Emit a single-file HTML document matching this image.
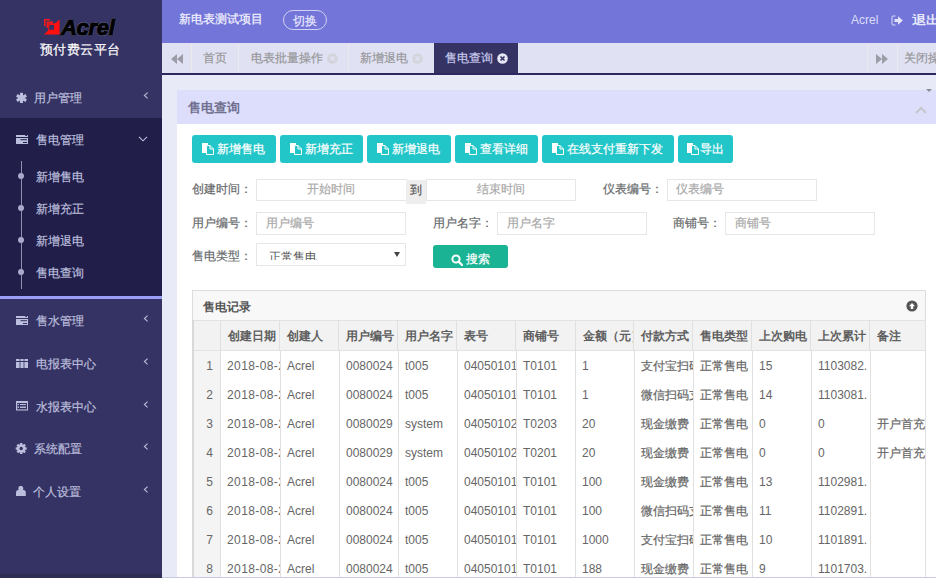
<!DOCTYPE html><html><head><meta charset="utf-8"><style>
*{box-sizing:border-box}
html,body{margin:0;padding:0}
body{width:936px;height:578px;overflow:hidden;position:relative;font-family:'Liberation Sans', sans-serif;background:#e9eaf8}
.t{position:absolute;line-height:20px;white-space:nowrap}
.abs{position:absolute}
.c{-webkit-text-stroke:0.2px currentColor}
</style></head><body>
<div class="abs" style="left:0;top:0;width:162px;height:578px;background:#353363"></div>
<div class="abs" style="left:0;top:118px;width:162px;height:178px;background:#211f4a"></div>
<div class="abs" style="left:0;top:296px;width:162px;height:3px;background:#9a9cf5"></div>
<div class="abs" style="left:0;top:574px;width:162px;height:4px;background:#2e2f52"></div>
<svg class="abs" style="left:40px;top:15px" width="24" height="24" viewBox="0 0 24 24">
<path d="M4 4 H10 V5.6 H5.6 V11 H4 Z" fill="#f01c1c"/>
<path d="M6.6 6.6 H13 V8.2 H8.2 V13 H6.6 Z" fill="#f01c1c"/>
<path d="M19.6 4.6 V19.6 H4 L8.5 15 H15 V8.5 Z" fill="#ff1010"/>
<path d="M8.2 8.2 H15 V15 H8.2 Z M9.3 10 V14.7 H14 V10 Z" fill="#ff1010" fill-rule="evenodd"/>
</svg>
<div class="t" style="left:61px;top:15.5px;font-size:22px;color:#000;font-weight:bold;font-style:italic;line-height:24px;letter-spacing:-0.3px;-webkit-text-stroke:1.1px #000;text-shadow:0.8px 0 0 rgba(150,150,190,.7),-0.8px 0 0 rgba(150,150,190,.7),0 0.8px 0 rgba(150,150,190,.7),0 -0.8px 0 rgba(150,150,190,.7)">Acrel</div>
<div class="t c" style="left:40px;top:40px;font-size:13px;color:#fff;letter-spacing:0.4px">预付费云平台</div>
<div class="t c" style="left:34px;top:88px;font-size:12px;color:#bcbedd;">用户管理</div>
<svg class="abs" style="left:16px;top:92px" width="11" height="12" viewBox="0 0 11 12"><g stroke="#bcbedd" stroke-width="3" stroke-linecap="butt"><line x1="5.5" y1="0.8" x2="5.5" y2="11"/><line x1="0.8" y1="3.4" x2="10.2" y2="8.6"/><line x1="0.8" y1="8.6" x2="10.2" y2="3.4"/></g><circle cx="5.5" cy="6" r="2.6" fill="#bcbedd"/></svg>
<svg class="abs" style="left:142.5px;top:92px" width="6" height="7" viewBox="0 0 6 7"><path d="M4.6 0.6 L1.4 3.5 L4.6 6.4" fill="none" stroke="#bcbedd" stroke-width="1.1"/></svg>
<div class="t c" style="left:36px;top:130px;font-size:12px;color:#bcbedd;">售电管理</div>
<svg class="abs" style="left:16px;top:135px" width="12" height="9" viewBox="0 0 12 9"><rect x="0" y="0" width="12" height="2" fill="#bcbedd"/><rect x="9.3" y="0" width="1.8" height="1" fill="#211f4a"/><rect x="0" y="3" width="12" height="6" fill="#bcbedd"/><rect x="4.5" y="4.2" width="6.5" height="1" fill="#211f4a"/><rect x="7" y="7" width="4" height="1" fill="#211f4a"/></svg>
<svg class="abs" style="left:138px;top:136px" width="10" height="6" viewBox="0 0 10 6"><path d="M1 0.8 L5 4.8 L9 0.8" fill="none" stroke="#bcbedd" stroke-width="1.1"/></svg>
<div class="t c" style="left:36px;top:311px;font-size:12px;color:#bcbedd;">售水管理</div>
<svg class="abs" style="left:16px;top:316px" width="12" height="9" viewBox="0 0 12 9"><rect x="0" y="0" width="12" height="2" fill="#bcbedd"/><rect x="9.3" y="0" width="1.8" height="1" fill="#353363"/><rect x="0" y="3" width="12" height="6" fill="#bcbedd"/><rect x="4.5" y="4.2" width="6.5" height="1" fill="#353363"/><rect x="7" y="7" width="4" height="1" fill="#353363"/></svg>
<svg class="abs" style="left:142.5px;top:315px" width="6" height="7" viewBox="0 0 6 7"><path d="M4.6 0.6 L1.4 3.5 L4.6 6.4" fill="none" stroke="#bcbedd" stroke-width="1.1"/></svg>
<div class="t c" style="left:36px;top:354px;font-size:12px;color:#bcbedd;">电报表中心</div>
<svg class="abs" style="left:16px;top:359px" width="12" height="9" viewBox="0 0 12 9"><rect x="0" y="0" width="12" height="2" fill="#bcbedd"/><rect x="0" y="3" width="12" height="6" fill="#bcbedd"/><rect x="3.6" y="0" width="0.8" height="9" fill="#353363"/><rect x="7.6" y="0" width="0.8" height="9" fill="#353363"/></svg>
<svg class="abs" style="left:142.5px;top:358px" width="6" height="7" viewBox="0 0 6 7"><path d="M4.6 0.6 L1.4 3.5 L4.6 6.4" fill="none" stroke="#bcbedd" stroke-width="1.1"/></svg>
<div class="t c" style="left:36px;top:397px;font-size:12px;color:#bcbedd;">水报表中心</div>
<svg class="abs" style="left:16px;top:401px" width="12" height="10" viewBox="0 0 12 10"><rect x="0" y="0" width="12" height="9.5" fill="#bcbedd"/><rect x="1.2" y="2" width="9.8" height="6.4" fill="#353363"/><rect x="4" y="3" width="6" height="1" fill="#bcbedd"/><rect x="4" y="5.5" width="6" height="1.4" fill="#bcbedd"/><rect x="1.5" y="3" width="1.5" height="1" fill="#bcbedd"/><rect x="1.5" y="5.5" width="1.5" height="1.4" fill="#bcbedd"/></svg>
<svg class="abs" style="left:142.5px;top:401px" width="6" height="7" viewBox="0 0 6 7"><path d="M4.6 0.6 L1.4 3.5 L4.6 6.4" fill="none" stroke="#bcbedd" stroke-width="1.1"/></svg>
<div class="t c" style="left:34px;top:439px;font-size:12px;color:#bcbedd;">系统配置</div>
<svg class="abs" style="left:15px;top:443px" width="12" height="11" viewBox="0 0 12 11"><g fill="#bcbedd"><circle cx="6.2" cy="5.5" r="4.2"/><g transform="translate(6.2 5.5)"><rect x="-1.2" y="-5.5" width="2.4" height="11"/><rect x="-1.2" y="-5.5" width="2.4" height="11" transform="rotate(45)"/><rect x="-1.2" y="-5.5" width="2.4" height="11" transform="rotate(90)"/><rect x="-1.2" y="-5.5" width="2.4" height="11" transform="rotate(135)"/></g></g><circle cx="6.2" cy="5.5" r="1.7" fill="#353363"/></svg>
<svg class="abs" style="left:142.5px;top:443px" width="6" height="7" viewBox="0 0 6 7"><path d="M4.6 0.6 L1.4 3.5 L4.6 6.4" fill="none" stroke="#bcbedd" stroke-width="1.1"/></svg>
<div class="t c" style="left:33px;top:482px;font-size:12px;color:#bcbedd;">个人设置</div>
<svg class="abs" style="left:16px;top:486px" width="10" height="10" viewBox="0 0 10 10"><circle cx="4.8" cy="2.4" r="2.5" fill="#bcbedd"/><path d="M0 10 V6.3 Q0 3.9 2.4 3.9 H7.4 Q9.8 3.9 9.8 6.3 V10 Z" fill="#bcbedd"/></svg>
<svg class="abs" style="left:142.5px;top:486px" width="6" height="7" viewBox="0 0 6 7"><path d="M4.6 0.6 L1.4 3.5 L4.6 6.4" fill="none" stroke="#bcbedd" stroke-width="1.1"/></svg>
<div class="abs" style="left:21px;top:161px;width:1px;height:128px;background:#8f90b0"></div>
<div class="t c" style="left:36px;top:167px;font-size:12px;color:#bcbedd;">新增售电</div>
<div class="abs" style="left:18px;top:173px;width:6px;height:6px;border-radius:50%;background:#a9aacb"></div>
<div class="t c" style="left:36px;top:199px;font-size:12px;color:#bcbedd;">新增充正</div>
<div class="abs" style="left:18px;top:205px;width:6px;height:6px;border-radius:50%;background:#a9aacb"></div>
<div class="t c" style="left:36px;top:231px;font-size:12px;color:#bcbedd;">新增退电</div>
<div class="abs" style="left:18px;top:237px;width:6px;height:6px;border-radius:50%;background:#a9aacb"></div>
<div class="t c" style="left:36px;top:263px;font-size:12px;color:#bcbedd;">售电查询</div>
<div class="abs" style="left:18px;top:269px;width:6px;height:6px;border-radius:50%;background:#a9aacb"></div>
<div class="abs" style="left:162px;top:0;width:774px;height:43px;background:#7375d9"></div>
<div class="t c" style="left:179px;top:9px;font-size:12px;color:#f4f4ff;">新电表测试项目</div>
<div class="abs" style="left:283px;top:10px;width:44px;height:20px;border:1px solid #cfd0f4;border-radius:10px"></div>
<div class="t c" style="left:293px;top:11px;font-size:12px;color:#e8e8ff;">切换</div>
<div class="t" style="left:851px;top:10px;font-size:12px;color:#dcdcf8;">Acrel</div>
<svg class="abs" style="left:891px;top:14.5px" width="13" height="11" viewBox="0 0 13 11"><path d="M4.5 1 H2 Q1 1 1 2 V9 Q1 10 2 10 H4.5" fill="none" stroke="#dcdcf8" stroke-width="1"/><path d="M3.5 4 H7 V1.2 L11.8 5.5 L7 9.8 V7 H3.5 Z" fill="#e4e4fb"/></svg>
<div class="t" style="left:912px;top:11px;font-size:14px;color:#e8e8fc;font-weight:bold;transform:scaleY(0.83);transform-origin:0 3px">退出</div>
<div class="abs" style="left:162px;top:43px;width:774px;height:30px;background:#e0e2f3"></div>
<div class="abs" style="left:162px;top:73px;width:774px;height:2px;background:#2b2960"></div>
<div class="abs" style="left:191px;top:43px;width:1px;height:30px;background:#ebe9ea"></div>
<div class="abs" style="left:238px;top:43px;width:1px;height:30px;background:#ebe9ea"></div>
<div class="abs" style="left:348px;top:43px;width:1px;height:30px;background:#ebe9ea"></div>
<div class="abs" style="left:867px;top:43px;width:1px;height:30px;background:#ebe9ea"></div>
<div class="abs" style="left:897px;top:43px;width:1px;height:30px;background:#ebe9ea"></div>
<svg class="abs" style="left:171px;top:54px" width="12" height="10" viewBox="0 0 12 10"><path d="M6 0 V10 L0 5 Z M12 0 V10 L6 5 Z" fill="#9c9ca6"/></svg>
<svg class="abs" style="left:876px;top:54px" width="12" height="10" viewBox="0 0 12 10"><path d="M0 0 V10 L6 5 Z M6 0 V10 L12 5 Z" fill="#9c9ca6"/></svg>
<div class="t c" style="left:203px;top:48px;font-size:12px;color:#979799;">首页</div>
<div class="t c" style="left:251px;top:48px;font-size:12px;color:#979799;">电表批量操作</div>
<div class="t c" style="left:360px;top:48px;font-size:12px;color:#979799;">新增退电</div>
<div class="t c" style="left:904px;top:48px;font-size:12px;color:#979799;">关闭操作</div>
<svg class="abs" style="left:327px;top:53px" width="11" height="11" viewBox="0 0 11 11"><circle cx="5.5" cy="5.5" r="5.3" fill="#d4d4dc"/><path d="M3.5 3.5 L7.5 7.5 M7.5 3.5 L3.5 7.5" stroke="#e0e2f3" stroke-width="1.6"/></svg>
<svg class="abs" style="left:412px;top:53px" width="11" height="11" viewBox="0 0 11 11"><circle cx="5.5" cy="5.5" r="5.3" fill="#d4d4dc"/><path d="M3.5 3.5 L7.5 7.5 M7.5 3.5 L3.5 7.5" stroke="#e0e2f3" stroke-width="1.6"/></svg>
<div class="abs" style="left:434px;top:43px;width:84px;height:30px;background:#353363"></div>
<div class="t c" style="left:445px;top:48px;font-size:12px;color:#c9caee;">售电查询</div>
<svg class="abs" style="left:497px;top:53px" width="11" height="11" viewBox="0 0 11 11"><circle cx="5.5" cy="5.5" r="5.3" fill="#e6e6f6"/><path d="M3.5 3.5 L7.5 7.5 M7.5 3.5 L3.5 7.5" stroke="#353363" stroke-width="1.6"/></svg>
<div class="abs" style="left:177px;top:90px;width:759px;height:488px;background:#fff"></div>
<div class="abs" style="left:177px;top:90px;width:759px;height:34px;background:#dcdefc"></div>
<div class="t" style="left:188px;top:98px;font-size:13px;color:#727090;font-weight:bold">售电查询</div>
<svg class="abs" style="left:926px;top:89px" width="7" height="3" viewBox="0 0 7 3"><path d="M0 0 H6 L3 3 Z" fill="#8d8d99"/></svg>
<svg class="abs" style="left:915px;top:106px" width="12" height="8" viewBox="0 0 12 8"><path d="M1 7 L6 2 L11 7" fill="none" stroke="#c6c5cc" stroke-width="2"/></svg>
<div class="abs" style="left:192px;top:135px;width:84px;height:28px;background:#23c6c8;border-radius:3px"></div>
<svg class="abs" style="left:202px;top:143px" width="12" height="12" viewBox="0 0 12 12"><path d="M0 0 H6 V2 H4 V10 H0 Z" fill="#fff"/><path d="M4.5 2.5 H8 L11.5 6 V11.5 H4.5 Z" fill="none" stroke="#fff" stroke-width="1"/><path d="M8 2.5 V6 H11.5" fill="none" stroke="#fff" stroke-width="1"/></svg>
<div class="t c" style="left:217px;top:139px;font-size:12px;color:#fff;">新增售电</div>
<div class="abs" style="left:280px;top:135px;width:83px;height:28px;background:#23c6c8;border-radius:3px"></div>
<svg class="abs" style="left:290px;top:143px" width="12" height="12" viewBox="0 0 12 12"><path d="M0 0 H6 V2 H4 V10 H0 Z" fill="#fff"/><path d="M4.5 2.5 H8 L11.5 6 V11.5 H4.5 Z" fill="none" stroke="#fff" stroke-width="1"/><path d="M8 2.5 V6 H11.5" fill="none" stroke="#fff" stroke-width="1"/></svg>
<div class="t c" style="left:305px;top:139px;font-size:12px;color:#fff;">新增充正</div>
<div class="abs" style="left:367px;top:135px;width:84px;height:28px;background:#23c6c8;border-radius:3px"></div>
<svg class="abs" style="left:377px;top:143px" width="12" height="12" viewBox="0 0 12 12"><path d="M0 0 H6 V2 H4 V10 H0 Z" fill="#fff"/><path d="M4.5 2.5 H8 L11.5 6 V11.5 H4.5 Z" fill="none" stroke="#fff" stroke-width="1"/><path d="M8 2.5 V6 H11.5" fill="none" stroke="#fff" stroke-width="1"/></svg>
<div class="t c" style="left:392px;top:139px;font-size:12px;color:#fff;">新增退电</div>
<div class="abs" style="left:455px;top:135px;width:83px;height:28px;background:#23c6c8;border-radius:3px"></div>
<svg class="abs" style="left:465px;top:143px" width="12" height="12" viewBox="0 0 12 12"><path d="M0 0 H6 V2 H4 V10 H0 Z" fill="#fff"/><path d="M4.5 2.5 H8 L11.5 6 V11.5 H4.5 Z" fill="none" stroke="#fff" stroke-width="1"/><path d="M8 2.5 V6 H11.5" fill="none" stroke="#fff" stroke-width="1"/></svg>
<div class="t c" style="left:480px;top:139px;font-size:12px;color:#fff;">查看详细</div>
<div class="abs" style="left:542px;top:135px;width:132px;height:28px;background:#23c6c8;border-radius:3px"></div>
<svg class="abs" style="left:552px;top:143px" width="12" height="12" viewBox="0 0 12 12"><path d="M0 0 H6 V2 H4 V10 H0 Z" fill="#fff"/><path d="M4.5 2.5 H8 L11.5 6 V11.5 H4.5 Z" fill="none" stroke="#fff" stroke-width="1"/><path d="M8 2.5 V6 H11.5" fill="none" stroke="#fff" stroke-width="1"/></svg>
<div class="t c" style="left:567px;top:139px;font-size:12px;color:#fff;">在线支付重新下发</div>
<div class="abs" style="left:678px;top:135px;width:55px;height:28px;background:#23c6c8;border-radius:3px"></div>
<svg class="abs" style="left:687px;top:143px" width="12" height="12" viewBox="0 0 12 12"><path d="M0 0 H6 V2 H4 V10 H0 Z" fill="#fff"/><path d="M4.5 2.5 H8 L11.5 6 V11.5 H4.5 Z" fill="none" stroke="#fff" stroke-width="1"/><path d="M8 2.5 V6 H11.5" fill="none" stroke="#fff" stroke-width="1"/></svg>
<div class="t c" style="left:700px;top:139px;font-size:12px;color:#fff;">导出</div>
<div class="t c" style="left:192px;top:179px;font-size:12px;color:#676a6c;">创建时间：</div>
<div class="abs" style="left:256px;top:179px;width:151px;height:22px;border:1px solid #e5e6e7;background:#fff"></div>
<div class="t c" style="left:307px;top:179px;font-size:12px;color:#a9a9a9;">开始时间</div>
<div class="abs" style="left:406px;top:180px;width:20px;height:24px;background:#eee"></div>
<div class="t c" style="left:410px;top:180px;font-size:12px;color:#555;">到</div>
<div class="abs" style="left:426px;top:179px;width:150px;height:22px;border:1px solid #e5e6e7;background:#fff"></div>
<div class="t c" style="left:477px;top:179px;font-size:12px;color:#a9a9a9;">结束时间</div>
<div class="t c" style="left:603px;top:179px;font-size:12px;color:#676a6c;">仪表编号：</div>
<div class="abs" style="left:667px;top:179px;width:150px;height:22px;border:1px solid #e5e6e7;background:#fff"></div>
<div class="t c" style="left:676px;top:179px;font-size:12px;color:#a9a9a9;">仪表编号</div>
<div class="t c" style="left:192px;top:213px;font-size:12px;color:#676a6c;">用户编号：</div>
<div class="abs" style="left:256px;top:212px;width:150px;height:23px;border:1px solid #e5e6e7;background:#fff"></div>
<div class="t c" style="left:266px;top:213px;font-size:12px;color:#a9a9a9;">用户编号</div>
<div class="t c" style="left:433px;top:213px;font-size:12px;color:#676a6c;">用户名字：</div>
<div class="abs" style="left:497px;top:212px;width:150px;height:23px;border:1px solid #e5e6e7;background:#fff"></div>
<div class="t c" style="left:507px;top:213px;font-size:12px;color:#a9a9a9;">用户名字</div>
<div class="t c" style="left:673px;top:213px;font-size:12px;color:#676a6c;">商铺号：</div>
<div class="abs" style="left:725px;top:212px;width:150px;height:23px;border:1px solid #e5e6e7;background:#fff"></div>
<div class="t c" style="left:735px;top:213px;font-size:12px;color:#a9a9a9;">商铺号</div>
<div class="t c" style="left:192px;top:246px;font-size:12px;color:#676a6c;">售电类型：</div>
<div class="abs" style="left:256px;top:243px;width:150px;height:23px;border:1px solid #e5e6e7;background:#fff"></div>
<div class="abs" style="left:269px;top:244px;width:120px;height:16px;overflow:hidden"><div class="t" style="left:0;top:2.5px;font-size:12px;color:#555">正常售电</div></div>
<svg class="abs" style="left:393.5px;top:251.5px" width="6" height="5" viewBox="0 0 6 5"><path d="M0 0 H6 L3 5 Z" fill="#444"/></svg>
<div class="abs" style="left:433px;top:245px;width:75px;height:23px;background:#1ab394;border-radius:3px"></div>
<svg class="abs" style="left:451px;top:253.5px" width="12" height="12" viewBox="0 0 12 12"><circle cx="5" cy="5" r="3.6" fill="none" stroke="#fff" stroke-width="2"/><path d="M7.5 7.5 L11 11" stroke="#fff" stroke-width="2.4" stroke-linecap="round"/></svg>
<div class="t c" style="left:466px;top:248.5px;font-size:12px;color:#fff;">搜索</div>
<div class="abs" style="left:192px;top:290px;width:734px;height:300px;border:1px solid #dddddd;background:#fff"></div>
<div class="abs" style="left:193px;top:291px;width:732px;height:30px;background:#f8f8f8;border-bottom:1px solid #e2e2e2"></div>
<div class="t" style="left:203px;top:297px;font-size:12px;color:#555;font-weight:bold">售电记录</div>
<svg class="abs" style="left:906px;top:300px" width="12" height="12" viewBox="0 0 12 12"><circle cx="6" cy="6" r="5.6" fill="#555"/><path d="M6 3 L9 6.2 H7.2 V9 H4.8 V6.2 H3 Z" fill="#fff"/></svg>
<div class="abs" style="left:194px;top:321px;width:731px;height:30px;background:#f2f2f2;border-bottom:1px solid #e3e3e3"></div>
<div class="abs" style="left:192px;top:320px;width:2px;height:258px;background:#d9d9d9"></div>
<div class="abs" style="left:194px;top:351px;width:26px;height:227px;background:#f4f4f4"></div>
<div class="abs" style="left:220px;top:321px;width:1px;height:30px;background:#e0e0e0"></div>
<div class="abs" style="left:279px;top:321px;width:1px;height:30px;background:#e0e0e0"></div>
<div class="abs" style="left:338px;top:321px;width:1px;height:30px;background:#e0e0e0"></div>
<div class="abs" style="left:397px;top:321px;width:1px;height:30px;background:#e0e0e0"></div>
<div class="abs" style="left:456px;top:321px;width:1px;height:30px;background:#e0e0e0"></div>
<div class="abs" style="left:515px;top:321px;width:1px;height:30px;background:#e0e0e0"></div>
<div class="abs" style="left:575px;top:321px;width:1px;height:30px;background:#e0e0e0"></div>
<div class="abs" style="left:633px;top:321px;width:1px;height:30px;background:#e0e0e0"></div>
<div class="abs" style="left:692px;top:321px;width:1px;height:30px;background:#e0e0e0"></div>
<div class="abs" style="left:751px;top:321px;width:1px;height:30px;background:#e0e0e0"></div>
<div class="abs" style="left:810px;top:321px;width:1px;height:30px;background:#e0e0e0"></div>
<div class="abs" style="left:869px;top:321px;width:1px;height:30px;background:#e0e0e0"></div>
<div class="abs" style="left:220px;top:351px;width:1px;height:227px;background:#e0e0e0"></div>
<div class="abs" style="left:280px;top:351px;width:1px;height:227px;background:#e0e0e0"></div>
<div class="abs" style="left:339px;top:351px;width:1px;height:227px;background:#e0e0e0"></div>
<div class="abs" style="left:398px;top:351px;width:1px;height:227px;background:#e0e0e0"></div>
<div class="abs" style="left:457px;top:351px;width:1px;height:227px;background:#e0e0e0"></div>
<div class="abs" style="left:516px;top:351px;width:1px;height:227px;background:#e0e0e0"></div>
<div class="abs" style="left:575px;top:351px;width:1px;height:227px;background:#e0e0e0"></div>
<div class="abs" style="left:634px;top:351px;width:1px;height:227px;background:#e0e0e0"></div>
<div class="abs" style="left:693px;top:351px;width:1px;height:227px;background:#e0e0e0"></div>
<div class="abs" style="left:752px;top:351px;width:1px;height:227px;background:#e0e0e0"></div>
<div class="abs" style="left:811px;top:351px;width:1px;height:227px;background:#e0e0e0"></div>
<div class="abs" style="left:870px;top:351px;width:1px;height:227px;background:#e0e0e0"></div>
<div class="abs" style="left:925px;top:320px;width:1px;height:258px;background:#e0e0e0"></div>
<div class="abs" style="left:221px;top:321px;width:58px;height:30px;overflow:hidden"><div class="t" style="left:7px;top:5px;font-size:12px;color:#5e5e5e;font-weight:bold">创建日期</div></div>
<div class="abs" style="left:280px;top:321px;width:58px;height:30px;overflow:hidden"><div class="t" style="left:7px;top:5px;font-size:12px;color:#5e5e5e;font-weight:bold">创建人</div></div>
<div class="abs" style="left:339px;top:321px;width:58px;height:30px;overflow:hidden"><div class="t" style="left:7px;top:5px;font-size:12px;color:#5e5e5e;font-weight:bold">用户编号</div></div>
<div class="abs" style="left:398px;top:321px;width:58px;height:30px;overflow:hidden"><div class="t" style="left:7px;top:5px;font-size:12px;color:#5e5e5e;font-weight:bold">用户名字</div></div>
<div class="abs" style="left:457px;top:321px;width:58px;height:30px;overflow:hidden"><div class="t" style="left:7px;top:5px;font-size:12px;color:#5e5e5e;font-weight:bold">表号</div></div>
<div class="abs" style="left:516px;top:321px;width:59px;height:30px;overflow:hidden"><div class="t" style="left:7px;top:5px;font-size:12px;color:#5e5e5e;font-weight:bold">商铺号</div></div>
<div class="abs" style="left:576px;top:321px;width:57px;height:30px;overflow:hidden"><div class="t" style="left:7px;top:5px;font-size:12px;color:#5e5e5e;font-weight:bold">金额（元）</div></div>
<div class="abs" style="left:634px;top:321px;width:58px;height:30px;overflow:hidden"><div class="t" style="left:7px;top:5px;font-size:12px;color:#5e5e5e;font-weight:bold">付款方式</div></div>
<div class="abs" style="left:693px;top:321px;width:58px;height:30px;overflow:hidden"><div class="t" style="left:7px;top:5px;font-size:12px;color:#5e5e5e;font-weight:bold">售电类型</div></div>
<div class="abs" style="left:752px;top:321px;width:58px;height:30px;overflow:hidden"><div class="t" style="left:7px;top:5px;font-size:12px;color:#5e5e5e;font-weight:bold">上次购电</div></div>
<div class="abs" style="left:811px;top:321px;width:58px;height:30px;overflow:hidden"><div class="t" style="left:7px;top:5px;font-size:12px;color:#5e5e5e;font-weight:bold">上次累计</div></div>
<div class="abs" style="left:870px;top:321px;width:55px;height:30px;overflow:hidden"><div class="t" style="left:7px;top:5px;font-size:12px;color:#5e5e5e;font-weight:bold">备注</div></div>
<div class="abs" style="left:194px;top:351px;width:26px;height:29px"><div class="t" style="right:7px;top:5px;font-size:12px;color:#666">1</div></div>
<div class="abs" style="left:221px;top:351px;width:59px;height:29px;overflow:hidden"><div class="t" style="left:6px;top:5px;font-size:12px;color:#666;letter-spacing:0.4px">2018-08-21</div></div>
<div class="abs" style="left:281px;top:351px;width:58px;height:29px;overflow:hidden"><div class="t" style="left:6px;top:5px;font-size:12px;color:#666">Acrel</div></div>
<div class="abs" style="left:340px;top:351px;width:58px;height:29px;overflow:hidden"><div class="t" style="left:6px;top:5px;font-size:12px;color:#666">0080024</div></div>
<div class="abs" style="left:399px;top:351px;width:58px;height:29px;overflow:hidden"><div class="t" style="left:6px;top:5px;font-size:12px;color:#666">t005</div></div>
<div class="abs" style="left:458px;top:351px;width:58px;height:29px;overflow:hidden"><div class="t" style="left:6px;top:5px;font-size:12px;color:#666">040501010001</div></div>
<div class="abs" style="left:517px;top:351px;width:58px;height:29px;overflow:hidden"><div class="t" style="left:6px;top:5px;font-size:12px;color:#666">T0101</div></div>
<div class="abs" style="left:576px;top:351px;width:58px;height:29px;overflow:hidden"><div class="t" style="left:6px;top:5px;font-size:12px;color:#666">1</div></div>
<div class="abs" style="left:635px;top:351px;width:58px;height:29px;overflow:hidden"><div class="t c" style="left:6px;top:5px;font-size:12px;color:#666">支付宝扫码</div></div>
<div class="abs" style="left:694px;top:351px;width:58px;height:29px;overflow:hidden"><div class="t c" style="left:6px;top:5px;font-size:12px;color:#666">正常售电</div></div>
<div class="abs" style="left:753px;top:351px;width:58px;height:29px;overflow:hidden"><div class="t" style="left:6px;top:5px;font-size:12px;color:#666">15</div></div>
<div class="abs" style="left:812px;top:351px;width:58px;height:29px;overflow:hidden"><div class="t" style="left:6px;top:5px;font-size:12px;color:#666">1103082.</div></div>
<div class="abs" style="left:194px;top:380px;width:26px;height:29px"><div class="t" style="right:7px;top:5px;font-size:12px;color:#666">2</div></div>
<div class="abs" style="left:221px;top:380px;width:59px;height:29px;overflow:hidden"><div class="t" style="left:6px;top:5px;font-size:12px;color:#666;letter-spacing:0.4px">2018-08-21</div></div>
<div class="abs" style="left:281px;top:380px;width:58px;height:29px;overflow:hidden"><div class="t" style="left:6px;top:5px;font-size:12px;color:#666">Acrel</div></div>
<div class="abs" style="left:340px;top:380px;width:58px;height:29px;overflow:hidden"><div class="t" style="left:6px;top:5px;font-size:12px;color:#666">0080024</div></div>
<div class="abs" style="left:399px;top:380px;width:58px;height:29px;overflow:hidden"><div class="t" style="left:6px;top:5px;font-size:12px;color:#666">t005</div></div>
<div class="abs" style="left:458px;top:380px;width:58px;height:29px;overflow:hidden"><div class="t" style="left:6px;top:5px;font-size:12px;color:#666">040501010001</div></div>
<div class="abs" style="left:517px;top:380px;width:58px;height:29px;overflow:hidden"><div class="t" style="left:6px;top:5px;font-size:12px;color:#666">T0101</div></div>
<div class="abs" style="left:576px;top:380px;width:58px;height:29px;overflow:hidden"><div class="t" style="left:6px;top:5px;font-size:12px;color:#666">1</div></div>
<div class="abs" style="left:635px;top:380px;width:58px;height:29px;overflow:hidden"><div class="t c" style="left:6px;top:5px;font-size:12px;color:#666">微信扫码支付</div></div>
<div class="abs" style="left:694px;top:380px;width:58px;height:29px;overflow:hidden"><div class="t c" style="left:6px;top:5px;font-size:12px;color:#666">正常售电</div></div>
<div class="abs" style="left:753px;top:380px;width:58px;height:29px;overflow:hidden"><div class="t" style="left:6px;top:5px;font-size:12px;color:#666">14</div></div>
<div class="abs" style="left:812px;top:380px;width:58px;height:29px;overflow:hidden"><div class="t" style="left:6px;top:5px;font-size:12px;color:#666">1103081.</div></div>
<div class="abs" style="left:194px;top:409px;width:26px;height:29px"><div class="t" style="right:7px;top:5px;font-size:12px;color:#666">3</div></div>
<div class="abs" style="left:221px;top:409px;width:59px;height:29px;overflow:hidden"><div class="t" style="left:6px;top:5px;font-size:12px;color:#666;letter-spacing:0.4px">2018-08-21</div></div>
<div class="abs" style="left:281px;top:409px;width:58px;height:29px;overflow:hidden"><div class="t" style="left:6px;top:5px;font-size:12px;color:#666">Acrel</div></div>
<div class="abs" style="left:340px;top:409px;width:58px;height:29px;overflow:hidden"><div class="t" style="left:6px;top:5px;font-size:12px;color:#666">0080029</div></div>
<div class="abs" style="left:399px;top:409px;width:58px;height:29px;overflow:hidden"><div class="t" style="left:6px;top:5px;font-size:12px;color:#666">system</div></div>
<div class="abs" style="left:458px;top:409px;width:58px;height:29px;overflow:hidden"><div class="t" style="left:6px;top:5px;font-size:12px;color:#666">040501020001</div></div>
<div class="abs" style="left:517px;top:409px;width:58px;height:29px;overflow:hidden"><div class="t" style="left:6px;top:5px;font-size:12px;color:#666">T0203</div></div>
<div class="abs" style="left:576px;top:409px;width:58px;height:29px;overflow:hidden"><div class="t" style="left:6px;top:5px;font-size:12px;color:#666">20</div></div>
<div class="abs" style="left:635px;top:409px;width:58px;height:29px;overflow:hidden"><div class="t c" style="left:6px;top:5px;font-size:12px;color:#666">现金缴费</div></div>
<div class="abs" style="left:694px;top:409px;width:58px;height:29px;overflow:hidden"><div class="t c" style="left:6px;top:5px;font-size:12px;color:#666">正常售电</div></div>
<div class="abs" style="left:753px;top:409px;width:58px;height:29px;overflow:hidden"><div class="t" style="left:6px;top:5px;font-size:12px;color:#666">0</div></div>
<div class="abs" style="left:812px;top:409px;width:58px;height:29px;overflow:hidden"><div class="t" style="left:6px;top:5px;font-size:12px;color:#666">0</div></div>
<div class="abs" style="left:871px;top:409px;width:54px;height:29px;overflow:hidden"><div class="t c" style="left:6px;top:5px;font-size:12px;color:#666">开户首充</div></div>
<div class="abs" style="left:194px;top:438px;width:26px;height:29px"><div class="t" style="right:7px;top:5px;font-size:12px;color:#666">4</div></div>
<div class="abs" style="left:221px;top:438px;width:59px;height:29px;overflow:hidden"><div class="t" style="left:6px;top:5px;font-size:12px;color:#666;letter-spacing:0.4px">2018-08-21</div></div>
<div class="abs" style="left:281px;top:438px;width:58px;height:29px;overflow:hidden"><div class="t" style="left:6px;top:5px;font-size:12px;color:#666">Acrel</div></div>
<div class="abs" style="left:340px;top:438px;width:58px;height:29px;overflow:hidden"><div class="t" style="left:6px;top:5px;font-size:12px;color:#666">0080029</div></div>
<div class="abs" style="left:399px;top:438px;width:58px;height:29px;overflow:hidden"><div class="t" style="left:6px;top:5px;font-size:12px;color:#666">system</div></div>
<div class="abs" style="left:458px;top:438px;width:58px;height:29px;overflow:hidden"><div class="t" style="left:6px;top:5px;font-size:12px;color:#666">040501020001</div></div>
<div class="abs" style="left:517px;top:438px;width:58px;height:29px;overflow:hidden"><div class="t" style="left:6px;top:5px;font-size:12px;color:#666">T0201</div></div>
<div class="abs" style="left:576px;top:438px;width:58px;height:29px;overflow:hidden"><div class="t" style="left:6px;top:5px;font-size:12px;color:#666">20</div></div>
<div class="abs" style="left:635px;top:438px;width:58px;height:29px;overflow:hidden"><div class="t c" style="left:6px;top:5px;font-size:12px;color:#666">现金缴费</div></div>
<div class="abs" style="left:694px;top:438px;width:58px;height:29px;overflow:hidden"><div class="t c" style="left:6px;top:5px;font-size:12px;color:#666">正常售电</div></div>
<div class="abs" style="left:753px;top:438px;width:58px;height:29px;overflow:hidden"><div class="t" style="left:6px;top:5px;font-size:12px;color:#666">0</div></div>
<div class="abs" style="left:812px;top:438px;width:58px;height:29px;overflow:hidden"><div class="t" style="left:6px;top:5px;font-size:12px;color:#666">0</div></div>
<div class="abs" style="left:871px;top:438px;width:54px;height:29px;overflow:hidden"><div class="t c" style="left:6px;top:5px;font-size:12px;color:#666">开户首充</div></div>
<div class="abs" style="left:194px;top:467px;width:26px;height:29px"><div class="t" style="right:7px;top:5px;font-size:12px;color:#666">5</div></div>
<div class="abs" style="left:221px;top:467px;width:59px;height:29px;overflow:hidden"><div class="t" style="left:6px;top:5px;font-size:12px;color:#666;letter-spacing:0.4px">2018-08-21</div></div>
<div class="abs" style="left:281px;top:467px;width:58px;height:29px;overflow:hidden"><div class="t" style="left:6px;top:5px;font-size:12px;color:#666">Acrel</div></div>
<div class="abs" style="left:340px;top:467px;width:58px;height:29px;overflow:hidden"><div class="t" style="left:6px;top:5px;font-size:12px;color:#666">0080024</div></div>
<div class="abs" style="left:399px;top:467px;width:58px;height:29px;overflow:hidden"><div class="t" style="left:6px;top:5px;font-size:12px;color:#666">t005</div></div>
<div class="abs" style="left:458px;top:467px;width:58px;height:29px;overflow:hidden"><div class="t" style="left:6px;top:5px;font-size:12px;color:#666">040501010001</div></div>
<div class="abs" style="left:517px;top:467px;width:58px;height:29px;overflow:hidden"><div class="t" style="left:6px;top:5px;font-size:12px;color:#666">T0101</div></div>
<div class="abs" style="left:576px;top:467px;width:58px;height:29px;overflow:hidden"><div class="t" style="left:6px;top:5px;font-size:12px;color:#666">100</div></div>
<div class="abs" style="left:635px;top:467px;width:58px;height:29px;overflow:hidden"><div class="t c" style="left:6px;top:5px;font-size:12px;color:#666">现金缴费</div></div>
<div class="abs" style="left:694px;top:467px;width:58px;height:29px;overflow:hidden"><div class="t c" style="left:6px;top:5px;font-size:12px;color:#666">正常售电</div></div>
<div class="abs" style="left:753px;top:467px;width:58px;height:29px;overflow:hidden"><div class="t" style="left:6px;top:5px;font-size:12px;color:#666">13</div></div>
<div class="abs" style="left:812px;top:467px;width:58px;height:29px;overflow:hidden"><div class="t" style="left:6px;top:5px;font-size:12px;color:#666">1102981.</div></div>
<div class="abs" style="left:194px;top:496px;width:26px;height:29px"><div class="t" style="right:7px;top:5px;font-size:12px;color:#666">6</div></div>
<div class="abs" style="left:221px;top:496px;width:59px;height:29px;overflow:hidden"><div class="t" style="left:6px;top:5px;font-size:12px;color:#666;letter-spacing:0.4px">2018-08-21</div></div>
<div class="abs" style="left:281px;top:496px;width:58px;height:29px;overflow:hidden"><div class="t" style="left:6px;top:5px;font-size:12px;color:#666">Acrel</div></div>
<div class="abs" style="left:340px;top:496px;width:58px;height:29px;overflow:hidden"><div class="t" style="left:6px;top:5px;font-size:12px;color:#666">0080024</div></div>
<div class="abs" style="left:399px;top:496px;width:58px;height:29px;overflow:hidden"><div class="t" style="left:6px;top:5px;font-size:12px;color:#666">t005</div></div>
<div class="abs" style="left:458px;top:496px;width:58px;height:29px;overflow:hidden"><div class="t" style="left:6px;top:5px;font-size:12px;color:#666">040501010001</div></div>
<div class="abs" style="left:517px;top:496px;width:58px;height:29px;overflow:hidden"><div class="t" style="left:6px;top:5px;font-size:12px;color:#666">T0101</div></div>
<div class="abs" style="left:576px;top:496px;width:58px;height:29px;overflow:hidden"><div class="t" style="left:6px;top:5px;font-size:12px;color:#666">100</div></div>
<div class="abs" style="left:635px;top:496px;width:58px;height:29px;overflow:hidden"><div class="t c" style="left:6px;top:5px;font-size:12px;color:#666">微信扫码支付</div></div>
<div class="abs" style="left:694px;top:496px;width:58px;height:29px;overflow:hidden"><div class="t c" style="left:6px;top:5px;font-size:12px;color:#666">正常售电</div></div>
<div class="abs" style="left:753px;top:496px;width:58px;height:29px;overflow:hidden"><div class="t" style="left:6px;top:5px;font-size:12px;color:#666">11</div></div>
<div class="abs" style="left:812px;top:496px;width:58px;height:29px;overflow:hidden"><div class="t" style="left:6px;top:5px;font-size:12px;color:#666">1102891.</div></div>
<div class="abs" style="left:194px;top:525px;width:26px;height:29px"><div class="t" style="right:7px;top:5px;font-size:12px;color:#666">7</div></div>
<div class="abs" style="left:221px;top:525px;width:59px;height:29px;overflow:hidden"><div class="t" style="left:6px;top:5px;font-size:12px;color:#666;letter-spacing:0.4px">2018-08-21</div></div>
<div class="abs" style="left:281px;top:525px;width:58px;height:29px;overflow:hidden"><div class="t" style="left:6px;top:5px;font-size:12px;color:#666">Acrel</div></div>
<div class="abs" style="left:340px;top:525px;width:58px;height:29px;overflow:hidden"><div class="t" style="left:6px;top:5px;font-size:12px;color:#666">0080024</div></div>
<div class="abs" style="left:399px;top:525px;width:58px;height:29px;overflow:hidden"><div class="t" style="left:6px;top:5px;font-size:12px;color:#666">t005</div></div>
<div class="abs" style="left:458px;top:525px;width:58px;height:29px;overflow:hidden"><div class="t" style="left:6px;top:5px;font-size:12px;color:#666">040501010001</div></div>
<div class="abs" style="left:517px;top:525px;width:58px;height:29px;overflow:hidden"><div class="t" style="left:6px;top:5px;font-size:12px;color:#666">T0101</div></div>
<div class="abs" style="left:576px;top:525px;width:58px;height:29px;overflow:hidden"><div class="t" style="left:6px;top:5px;font-size:12px;color:#666">1000</div></div>
<div class="abs" style="left:635px;top:525px;width:58px;height:29px;overflow:hidden"><div class="t c" style="left:6px;top:5px;font-size:12px;color:#666">支付宝扫码</div></div>
<div class="abs" style="left:694px;top:525px;width:58px;height:29px;overflow:hidden"><div class="t c" style="left:6px;top:5px;font-size:12px;color:#666">正常售电</div></div>
<div class="abs" style="left:753px;top:525px;width:58px;height:29px;overflow:hidden"><div class="t" style="left:6px;top:5px;font-size:12px;color:#666">10</div></div>
<div class="abs" style="left:812px;top:525px;width:58px;height:29px;overflow:hidden"><div class="t" style="left:6px;top:5px;font-size:12px;color:#666">1101891.</div></div>
<div class="abs" style="left:194px;top:554px;width:26px;height:29px"><div class="t" style="right:7px;top:5px;font-size:12px;color:#666">8</div></div>
<div class="abs" style="left:221px;top:554px;width:59px;height:29px;overflow:hidden"><div class="t" style="left:6px;top:5px;font-size:12px;color:#666;letter-spacing:0.4px">2018-08-21</div></div>
<div class="abs" style="left:281px;top:554px;width:58px;height:29px;overflow:hidden"><div class="t" style="left:6px;top:5px;font-size:12px;color:#666">Acrel</div></div>
<div class="abs" style="left:340px;top:554px;width:58px;height:29px;overflow:hidden"><div class="t" style="left:6px;top:5px;font-size:12px;color:#666">0080024</div></div>
<div class="abs" style="left:399px;top:554px;width:58px;height:29px;overflow:hidden"><div class="t" style="left:6px;top:5px;font-size:12px;color:#666">t005</div></div>
<div class="abs" style="left:458px;top:554px;width:58px;height:29px;overflow:hidden"><div class="t" style="left:6px;top:5px;font-size:12px;color:#666">040501010001</div></div>
<div class="abs" style="left:517px;top:554px;width:58px;height:29px;overflow:hidden"><div class="t" style="left:6px;top:5px;font-size:12px;color:#666">T0101</div></div>
<div class="abs" style="left:576px;top:554px;width:58px;height:29px;overflow:hidden"><div class="t" style="left:6px;top:5px;font-size:12px;color:#666">188</div></div>
<div class="abs" style="left:635px;top:554px;width:58px;height:29px;overflow:hidden"><div class="t c" style="left:6px;top:5px;font-size:12px;color:#666">现金缴费</div></div>
<div class="abs" style="left:694px;top:554px;width:58px;height:29px;overflow:hidden"><div class="t c" style="left:6px;top:5px;font-size:12px;color:#666">正常售电</div></div>
<div class="abs" style="left:753px;top:554px;width:58px;height:29px;overflow:hidden"><div class="t" style="left:6px;top:5px;font-size:12px;color:#666">9</div></div>
<div class="abs" style="left:812px;top:554px;width:58px;height:29px;overflow:hidden"><div class="t" style="left:6px;top:5px;font-size:12px;color:#666">1101703.</div></div>
<div class="abs" style="left:162px;top:577px;width:774px;height:1px;background:#c8c9e3"></div>
</body></html>
